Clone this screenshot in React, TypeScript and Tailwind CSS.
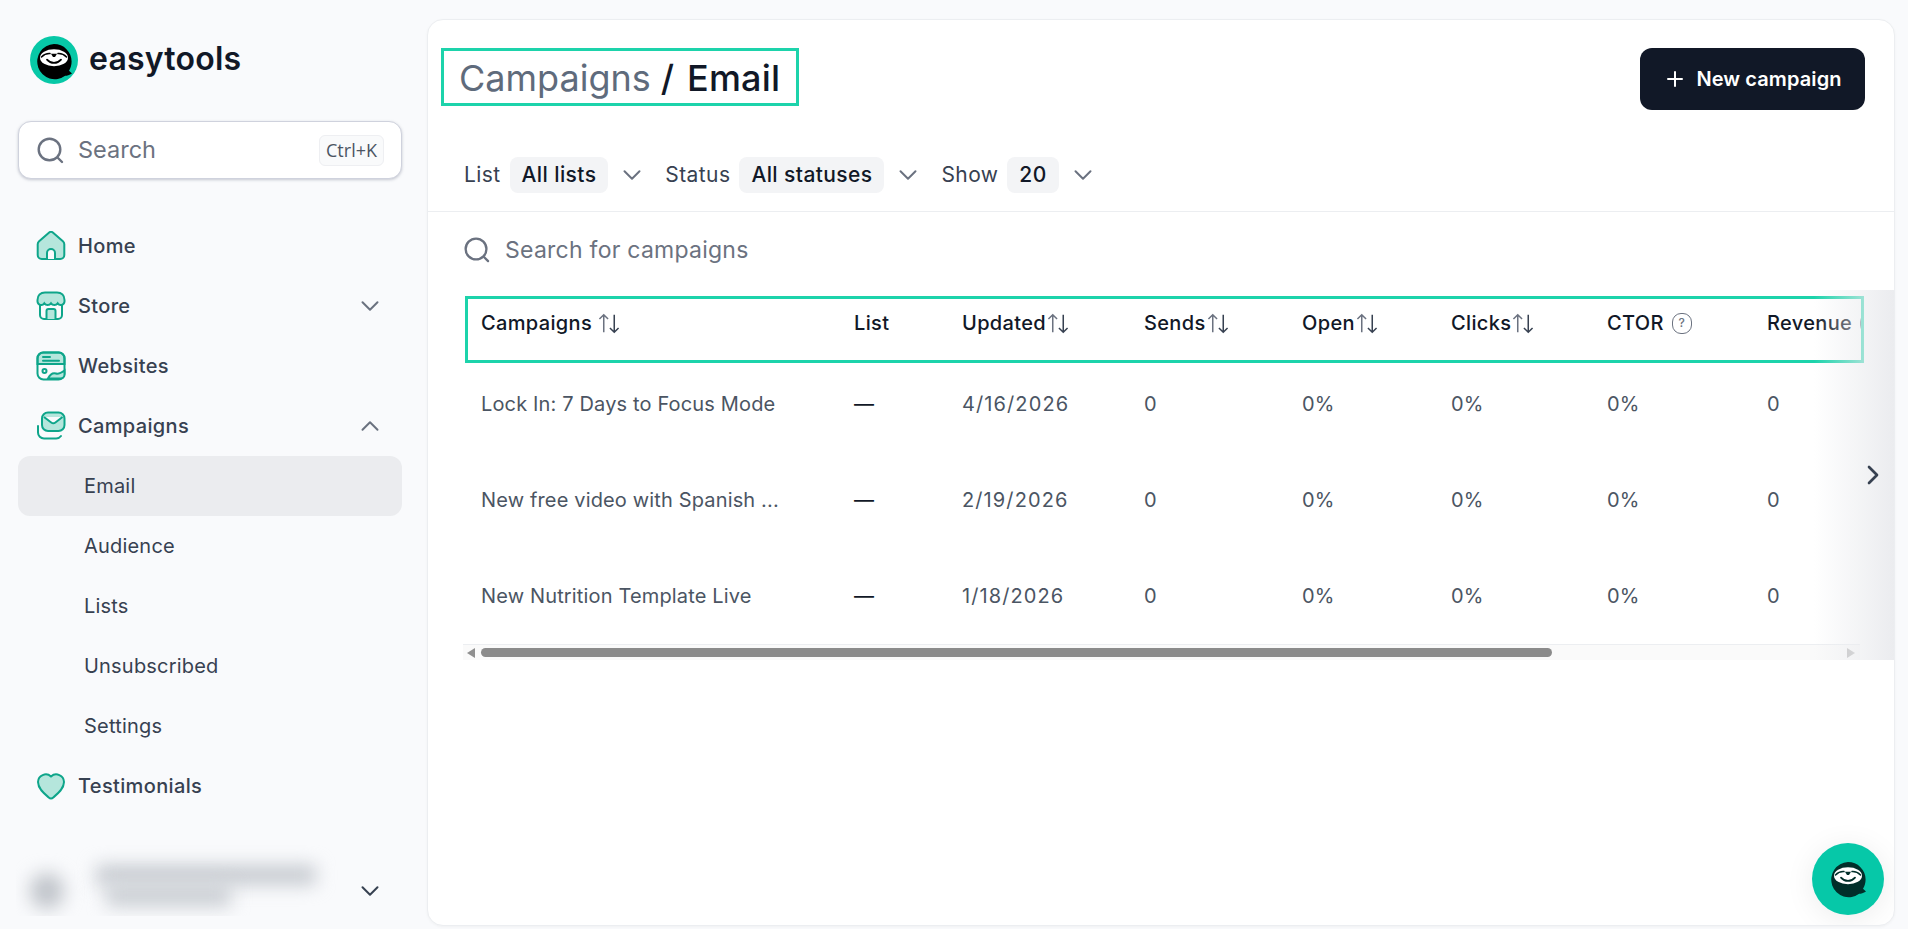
import { ChevronDown, ChevronRight, ChevronUp, Plus } from 'lucide-react';

const TEAL = '#0ea58a';
const TINT = '#b5e6dc';

/** Sloth head used by the logo and the chat button */
function Sloth({ head, className }: { head: string; className: string }) {
  return (
    <svg viewBox="0 0 36 36" className={className}>
      <path d="M18 0a17.600 17.600 0 0 1 17.600 17.600c0 3.400-1 6.600-2.600 9.200l3 2.600c-2.600 1.400-5 2.200-6.800 2.400A17.600 17.600 0 1 1 18 0Z" fill={head} />
      <ellipse cx="18" cy="13.700" rx="14" ry="8.500" fill="#fff" />
      <path d="M5.500 13c2.500-2.600 5.500-3.600 8.500-3.400M30.500 13c-2.500-2.600-5.500-3.600-8.500-3.400" fill="none" stroke={head} strokeWidth="1.500" strokeLinecap="round" />
      <path d="M15 9.800h6l-2 3.200h-2l-2-3.200Z" fill={head} />
      <path d="M11 15.600c2.200 2.500 4.700 3.300 7 3.300s4.800-.8 7-3.300" fill="none" stroke={head} strokeWidth="1.800" strokeLinecap="round" />
    </svg>
  );
}

function SearchGlyph({ className }: { className: string }) {
  return (
    <svg viewBox="0 0 27 27" fill="none" stroke="#6b7280" strokeWidth="2.400" strokeLinecap="round" className={className}>
      <circle cx="12.500" cy="12.500" r="10.800" />
      <path d="M21 21l4 4" />
    </svg>
  );
}

function HomeIcon() {
  return (
    <svg viewBox="0 0 30 30" fill={TINT} stroke={TEAL} strokeWidth="2" className="w-[30px] h-[30px]">
      <path d="M12.600 1.900a3.600 3.600 0 0 1 4.800 0l9.500 8.300c.9.800 1.400 1.900 1.400 3V24a4 4 0 0 1-4 4H5.700a4 4 0 0 1-4-4V13.200c0-1.100.5-2.200 1.400-3l9.500-8.300Z" />
      <path d="M11 28v-6a4 4 0 0 1 8 0v6" fill="#f9fafc" />
    </svg>
  );
}

function StoreIcon() {
  return (
    <svg viewBox="0 0 30 30" fill="none" stroke={TEAL} strokeWidth="2" className="w-[30px] h-[30px]">
      <path d="M4 14v10a4 4 0 0 0 4 4h14a4 4 0 0 0 4-4V14" />
      <path d="M10.500 28v-8a2 2 0 0 1 2-2h5a2 2 0 0 1 2 2v8" fill={TINT} />
      <path d="M9 1.500h12c4.500 0 7.500 3 7.500 7.500v1.500a3.700 3.700 0 0 1-6.800 1.800 4 4 0 0 1-6.700 0 4 4 0 0 1-6.700 0 3.700 3.700 0 0 1-6.800-1.800V9c0-4.500 3-7.500 7.500-7.500Z" fill={TINT} />
    </svg>
  );
}

function WebsiteIcon() {
  return (
    <svg viewBox="0 0 30 30" fill="none" stroke={TEAL} strokeWidth="2" className="w-[30px] h-[30px]">
      <path d="M7 1.500h16a5.500 5.500 0 0 1 5.500 5.500v6h-27V7A5.500 5.500 0 0 1 7 1.500Z" fill={TINT} />
      <rect x="1.500" y="1.500" width="27" height="27" rx="6" />
      <path d="M7 6h7M7 9.800h16" strokeLinecap="round" />
      <circle cx="8.500" cy="20" r="2" />
      <path d="M12 27.500c2-4 5-6 8-5 2.500.8 4 .3 8.500-3v4a4 4 0 0 1-4 4Z" fill={TINT} />
    </svg>
  );
}

function CampaignIcon() {
  return (
    <svg viewBox="0 0 30 30" fill="none" stroke={TEAL} strokeWidth="2" className="w-[30px] h-[30px]">
      <rect x="6" y="1.500" width="22.500" height="18.500" rx="6" fill={TINT} />
      <path d="M8 6l7.200 5.500a3.500 3.500 0 0 0 4.200 0L26.500 6" fill="#f9fafc" />
      <path d="M2 15v6.500a6 6 0 0 0 6 6h12a6 6 0 0 0 5-2.500" strokeLinecap="round" />
    </svg>
  );
}

function HeartIcon() {
  return (
    <svg viewBox="0 0 30 30" fill={TINT} stroke={TEAL} strokeWidth="2" className="w-[30px] h-[30px]">
      <path d="M15 27.500c-1 0-1.800-.6-2.600-1.300C8 22.500 2 17.500 2 11a7.800 7.800 0 0 1 13-5.600A7.800 7.800 0 0 1 28 11c0 6.500-6 11.500-10.400 15.200-.8.700-1.600 1.300-2.600 1.300Z" />
    </svg>
  );
}

function SortIcon({ className = '' }: { className?: string }) {
  return (
    <svg viewBox="0 0 20 18" fill="none" strokeWidth="1.300" className={`w-[24px] h-[21px] shrink-0 ${className}`}>
      <path d="M5.500 16.500V1.500M1.800 5.200l3.700-3.700 3.700 3.700" stroke="#6b7280" />
      <path d="M14.500 1.500v15M10.800 12.800l3.700 3.700 3.700-3.700" stroke="#374151" />
    </svg>
  );
}

function NavRow({ icon, label, chevron }: { icon: React.ReactNode; label: string; chevron?: 'up' | 'down' }) {
  return (
    <div className="flex items-center h-[60px] pl-[36px] pr-[48px] text-[#374151] font-medium">
      {icon}
      <span className="ml-[12px] flex-1 tracking-[0.35px]">{label}</span>
      {chevron === 'down' && <ChevronDown className="w-[30px] h-[30px] text-[#6b7280] -mr-[6px]" strokeWidth={1.600} />}
      {chevron === 'up' && <ChevronUp className="w-[30px] h-[30px] text-[#6b7280] -mr-[6px]" strokeWidth={1.600} />}
    </div>
  );
}

function SubRow({ label, active }: { label: string; active?: boolean }) {
  return (
    <div className={`flex items-center h-[60px] ml-[18px] mr-[25px] pl-[66px] rounded-xl text-[#374151] tracking-[0.2px] ${active ? 'bg-[#ebecef]' : ''}`}>
      {label}
    </div>
  );
}

function Filter({ label, value }: { label: string; value: string }) {
  return (
    <div className="flex items-center">
      <span className="text-[#374151]">{label}</span>
      <span className="ml-[9px] h-[36px] px-[12px] flex items-center rounded-lg bg-[#f3f4f6] text-[#111827] font-medium">{value}</span>
      <ChevronDown className="ml-[9px] mr-[18px] w-[30px] h-[30px] text-[#6b7280]" strokeWidth={1.600} />
    </div>
  );
}

const GRID = 'grid grid-cols-[373px_108px_182px_158px_149px_156px_160px_1fr]';

const rows = [
  { name: 'Lock In: 7 Days to Focus Mode', date: '4/16/2026' },
  { name: 'New free video with Spanish ...', date: '2/19/2026' },
  { name: 'New Nutrition Template Live', date: '1/18/2026' },
];

export default function App() {
  return (
    <div className="flex w-full h-screen overflow-hidden bg-[#f9fafc] font-[Inter,sans-serif] text-[20px] leading-[28px]">
      <aside className="w-[427px] shrink-0 flex flex-col">
        <div className="flex items-center mt-[36px] ml-[30px] h-[48px]">
          <div className="w-[48px] h-[48px] rounded-full bg-[#07c8a7] flex items-center justify-center">
            <Sloth head="#000" className="w-[36px] h-[36px] mt-[3px]" />
          </div>
          <span className="ml-[11px] -mt-[3px] text-[32px] font-semibold text-[#111827] tracking-[0.2px]">easytools</span>
        </div>

        <div className="mt-[37px] ml-[18px] mr-[25px] h-[58px] flex items-center pl-[18px] pr-[17px] bg-white rounded-[13px] border border-[#cfd2dd] shadow-[0_1px_3px_rgba(100,105,130,0.35)]">
          <SearchGlyph className="w-[27px] h-[27px]" />
          <span className="ml-[14px] flex-1 text-[23.500px] text-[#6b7280]">Search</span>
          <span className="h-[31px] w-[65px] flex items-center justify-center rounded-md bg-[#f9fafb] border border-[#eeeff2] font-['Open_Sans',sans-serif] text-[18px] text-[#4b5563]">Ctrl+K</span>
        </div>

        <nav className="mt-[37px]">
          <NavRow icon={<HomeIcon />} label="Home" />
          <NavRow icon={<StoreIcon />} label="Store" chevron="down" />
          <NavRow icon={<WebsiteIcon />} label="Websites" />
          <NavRow icon={<CampaignIcon />} label="Campaigns" chevron="up" />
          <SubRow label="Email" active />
          <SubRow label="Audience" />
          <SubRow label="Lists" />
          <SubRow label="Unsubscribed" />
          <SubRow label="Settings" />
          <NavRow icon={<HeartIcon />} label="Testimonials" />
        </nav>

        {/* account switcher, blurred in the source */}
        <div className="mt-[29px] h-[71px] ml-[16px] mr-[48px] flex items-center overflow-hidden">
          <div className="relative flex-1 h-full overflow-hidden">
            <div className="absolute left-[14px] top-[28px] w-[34px] h-[36px] rounded-full bg-[#c0c4ca] blur-[9px]" />
            <div className="absolute left-[80px] top-[20px] w-[220px] h-[20px] rounded bg-[#c6cad0] blur-[9px]" />
            <div className="absolute left-[90px] top-[38px] w-[125px] h-[24px] rounded bg-[#ccd0d5] blur-[9px]" />
          </div>
          <ChevronDown className="w-[30px] h-[30px] text-[#374151] -mr-[6px] mt-[20px]" strokeWidth={1.600} />
        </div>
      </aside>

      <div className="flex-1 min-w-0 pt-[19px] pr-[13px] pb-[3px]">
        <main className="relative h-full bg-white rounded-2xl border border-[#eceef1] shadow-[0_1px_3px_rgba(0,0,0,0.04)] overflow-hidden">
          <div className="flex items-start justify-between pt-[28px] pl-[13px] pr-[29px]">
            <div className="h-[58px] w-[358px] flex items-center pl-[15px] pt-[2px] border-[3px] border-[#1dd3ab] text-[36px] leading-none">
              <span className="text-[#5f6b7c]">Campaigns</span>
              <span className="text-[#111827] ml-[10px] font-medium tracking-[0.2px] [word-spacing:3px]">/ Email</span>
            </div>
            <button className="h-[62px] w-[225px] flex items-center justify-center rounded-xl bg-[#111827] text-white font-semibold text-[20px] tracking-[0.1px]">
              <Plus className="w-[24px] h-[24px] mr-[9px]" strokeWidth={2} />
              New campaign
            </button>
          </div>

          <div className="flex items-center mt-[47px] pl-[36px] pb-[18px] border-b border-[#eceef1] text-[21px] tracking-[0.4px]">
            <Filter label="List" value="All lists" />
            <Filter label="Status" value="All statuses" />
            <Filter label="Show" value="20" />
          </div>

          <div className="h-[76px] flex items-center pl-[36px]">
            <SearchGlyph className="w-[26px] h-[26px]" />
            <span className="ml-[15px] text-[23px] tracking-[0.25px] text-[#6b7280]">Search for campaigns</span>
          </div>

          <div className="relative mt-[2px] h-[370px] pt-[6px] overflow-hidden">
            <div className={`${GRID} ml-[37px] w-[1399px] h-[67px] pl-[13px] pt-[10px] border-[3px] border-[#1dd3ab] text-[#111827] font-medium tracking-[0.35px] overflow-hidden whitespace-nowrap`}>
              <div className="flex items-center h-[28px] gap-[5px]">Campaigns <SortIcon /></div>
              <div className="flex items-center h-[28px]">List</div>
              <div className="flex items-center h-[28px]">Updated<SortIcon /></div>
              <div className="flex items-center h-[28px]">Sends<SortIcon /></div>
              <div className="flex items-center h-[28px]">Open<SortIcon /></div>
              <div className="flex items-center h-[28px]">Clicks<SortIcon /></div>
              <div className="flex items-center h-[28px] gap-[8px]">
                CTOR
                <span className="w-[20px] h-[21px] rounded-[9px] border-[1.500px] border-[#6b7280] text-[#6b7280] text-[12px] leading-none flex items-center justify-center">?</span>
              </div>
              <div className="flex items-center h-[28px] gap-[8px]">
                Revenue
                <span className="w-[20px] h-[21px] rounded-[9px] border-[1.500px] border-[#6b7280] shrink-0" />
              </div>
            </div>

            <div className="-mt-[7px] ml-[38px] w-[1398px]">
              {rows.map((row) => (
                <div key={row.name} className={`${GRID} h-[96px] pl-[15px] items-center text-[#4b5563] tracking-[0.15px] whitespace-nowrap`}>
                  <div>{row.name}</div>
                  <div className="text-[#111827]">—</div>
                  <div className="tracking-[1.100px]">{row.date}</div>
                  <div>0</div>
                  <div>0%</div>
                  <div>0%</div>
                  <div>0%</div>
                  <div>0</div>
                </div>
              ))}
            </div>

            {/* horizontal scrollbar */}
            <div className="ml-[35px] w-[1397px] h-[16px] flex items-center bg-[#fafafa] border-t border-[#eceef1]">
              <span className="ml-[4px] w-0 h-0 border-y-[5px] border-y-transparent border-r-[8px] border-r-[#8f8f8f]" />
              <div className="ml-[6px] w-[1071px] h-[9px] rounded-full bg-[#8b8b8b]" />
              <span className="ml-auto mr-[5px] w-0 h-0 border-y-[5px] border-y-transparent border-l-[8px] border-l-[#bdbdbd]" />
            </div>

            <div className="absolute right-0 top-0 bottom-0 w-[80px] flex items-center justify-end pr-[5px] bg-gradient-to-r from-transparent to-[#ebecef]">
              <ChevronRight className="w-[32px] h-[32px] text-[#374151]" strokeWidth={2} />
            </div>
          </div>

          <button className="absolute right-[10px] bottom-[10px] w-[72px] h-[72px] rounded-full bg-[#06c8a8] flex items-center justify-center shadow-[0_4px_30px_rgba(0,0,0,0.08)]">
            <Sloth head="#012f2a" className="w-[36px] h-[36px] mt-[2px]" />
          </button>
        </main>
      </div>
    </div>
  );
}
